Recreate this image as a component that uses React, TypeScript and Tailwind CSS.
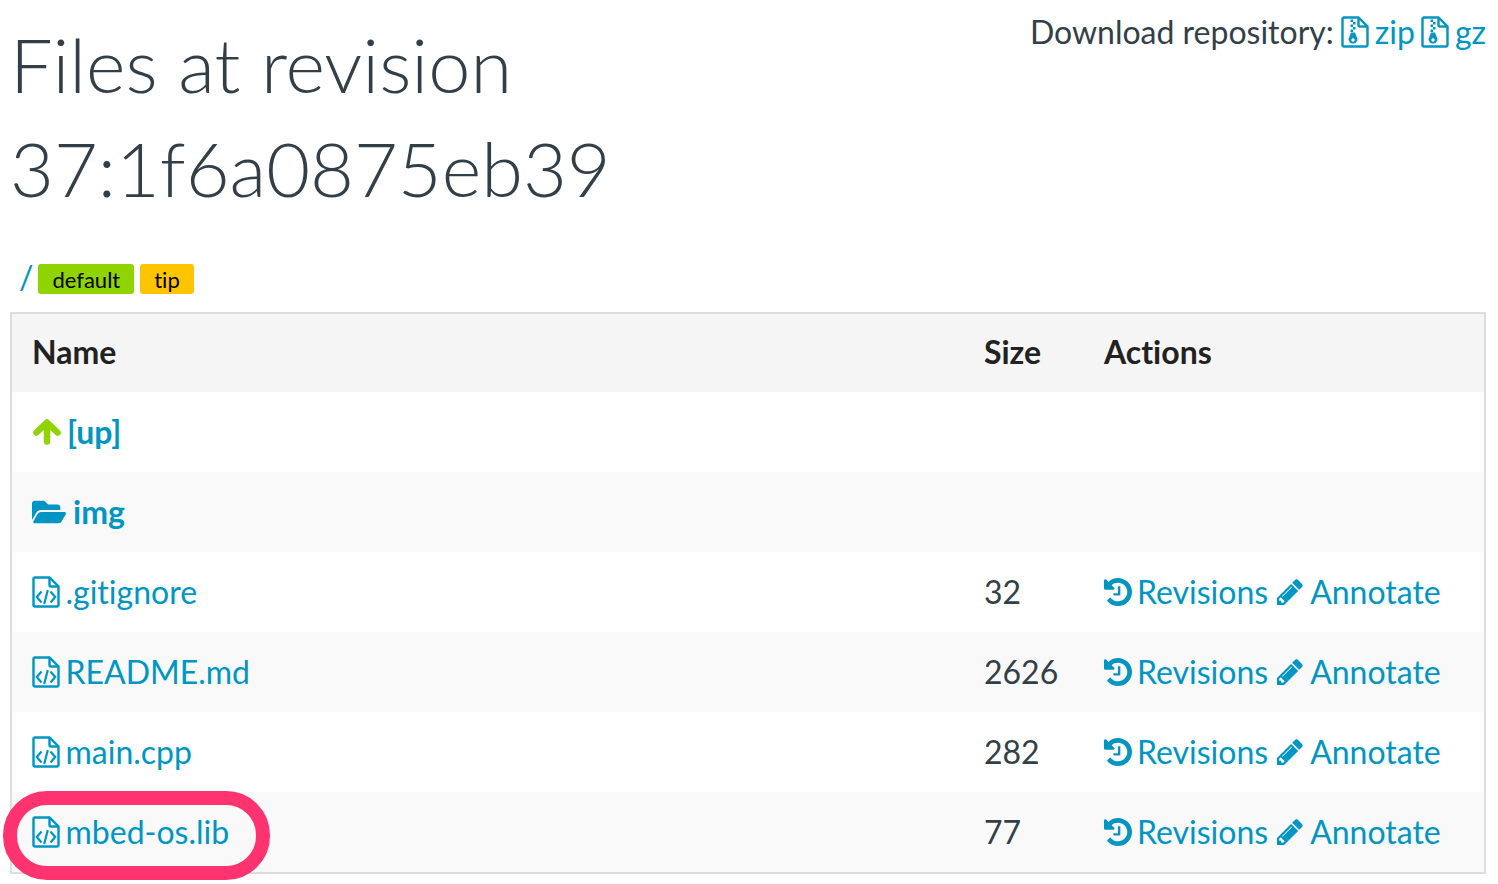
import React from 'react';
import { FaFolderOpen } from 'react-icons/fa';

const rows = [
  { name: '.gitignore', size: '32' },
  { name: 'README.md', size: '2626' },
  { name: 'main.cpp', size: '282' },
  { name: 'mbed-os.lib', size: '77' },
];

function FileCode() {
  return (
    <svg viewBox="0 0 28 32" className="w-[28px] h-[32px] shrink-0" fill="none" stroke="currentColor">
      <path d="M1.5 3A1.5 1.5 0 0 1 3 1.5h14.500l9 9V29a1.500 1.500 0 0 1-1.500 1.500H3A1.500 1.500 0 0 1 1.500 29z" strokeWidth="2.4" />
      <path d="M17.500 1.500V9a1.500 1.500 0 0 0 1.500 1.500h7.500" strokeWidth="2.4" />
      <path d="M9.500 15.500 4.800 21l4.700 5.500M18.500 15.500l4.700 5.500-4.700 5.500M15.800 14l-3.600 14" strokeWidth="2.2" />
    </svg>
  );
}

function FileZip() {
  return (
    <svg viewBox="0 0 28 32" className="w-[28px] h-[32px] shrink-0" fill="none" stroke="currentColor">
      <path d="M1.500 3A1.500 1.500 0 0 1 3 1.500h14.500l9 9V29a1.500 1.500 0 0 1-1.500 1.500H3A1.500 1.500 0 0 1 1.500 29z" strokeWidth="2.4" />
      <path d="M17.500 1.500V9a1.500 1.500 0 0 0 1.500 1.500h7.500" strokeWidth="2.4" />
      <path d="M9.500 3.500h2.500V6H9.500zM12 6h2.500v2.500H12zM9.500 8.500H12V11H9.500zM12 11h2.500v2.500H12zM9.500 13.500H12V16H9.500z" fill="currentColor" stroke="none" />
      <path d="M10 16.500h4l2.500 6.500a4.500 4.500 0 1 1-9 0z" fill="currentColor" stroke="none" />
      <circle cx="12" cy="24" r="1.700" fill="#fff" stroke="none" />
    </svg>
  );
}

function ArrowUp() {
  return (
    <svg viewBox="0 0 28 26" className="ml-[1px] h-[26px] w-[28px] shrink-0 text-[#8fd400]" fill="none" stroke="currentColor" strokeWidth="6.5" strokeLinecap="round" strokeLinejoin="round">
      <path d="M14 22.500V5M3.500 13.500 14 3.500l10.500 10" />
    </svg>
  );
}

function History() {
  return (
    <svg viewBox="128 128 1536 1536" className="h-[28px] w-[28px] shrink-0 mr-[5px]" fill="currentColor">
      <path d="M1664 896q0 156-61 298t-164 245-245 164-298 61q-172 0-327-72.500t-264-204.500q-7-10-6.500-22.500t8.500-20.500l137-137q10-9 25-9 16 2 23 12 73 95 179 147t225 52q104 0 198.500-40.500t163.500-109.500 109.500-163.500 40.500-198.500-40.500-198.500-109.500-163.500-163.500-109.500-198.500-40.500q-98 0-188 35.500t-160 101.500l137 138q31 30 14 69-17 40-59 40h-448q-26 0-45-19t-19-45v-448q0-42 40-59 39-17 69 14l130 129q107-101 244.500-156.500t284.500-55.500q156 0 298 61t245 164 164 245 61 298zm-640-288v448q0 14-9 23t-23 9h-320q-14 0-23-9t-9-23v-64q0-14 9-23t23-9h224v-352q0-14 9-23t23-9h64q14 0 23 9t9 23z" />
    </svg>
  );
}

function Pencil() {
  return (
    <svg viewBox="128 128 1536 1536" className="h-[26px] w-[26px] shrink-0 ml-[9px] mr-[7px]" fill="currentColor">
      <path d="M491 1536l91-91-235-235-91 91v107h128v128h107zm523-928q0-22-22-22-10 0-17 7l-542 542q-7 7-7 17 0 22 22 22 10 0 17-7l542-542q7-7 7-17zm-54-192l416 416-832 832h-416v-416zm683 96q0 53-37 90l-166 166-416-416 166-165q36-38 90-38 53 0 91 38l235 234q37 39 37 91z" />
    </svg>
  );
}

function Actions() {
  return (
    <div className="flex items-center text-[#0095c3]">
      <History />
      <span>Revisions</span>
      <Pencil />
      <span>Annotate</span>
    </div>
  );
}

export default function App() {
  return (
    <div className="relative h-[884px] overflow-hidden bg-white pl-[10px] pr-[12px] font-['Lato',sans-serif] text-[32px] text-[#333f48] [font-variant-ligatures:none]">
      <div className="flex items-start justify-between">
        <h1 className="pt-[12px] text-[75.7px] leading-[104px] font-light">
          <div>Files at revision</div>
          <div>37:1f6a0875eb39</div>
        </h1>
        <div className="flex items-center gap-[7px] pt-[12px] leading-[40px]">
          <span>Download repository:</span>
          <span className="flex items-center gap-[6px] text-[#0095c3]">
            <FileZip />
            <span>zip</span>
            <FileZip />
            <span>gz</span>
          </span>
        </div>
      </div>

      <div className="mt-[38px] flex h-[38px] items-center pl-[9px]">
        <span className="mr-[5px] text-[#0095c3]">/</span>
        <span className="mr-[6px] mt-[4px] rounded-[3px] bg-[#8fd400] px-[14px] pt-[2px] text-[22px] leading-[28px] text-black">default</span>
        <span className="mt-[4px] rounded-[3px] bg-[#ffc400] px-[14px] pt-[2px] text-[22px] leading-[28px] text-black">tip</span>
      </div>

      <div className="mt-[16px] border-2 border-[#dddddd] bg-white">
        <div className="flex h-[78px] items-center bg-[#f5f5f5] px-[20px] pb-[2px] font-bold text-[#222222]">
          <div className="w-[952px]">Name</div>
          <div className="w-[120px]">Size</div>
          <div>Actions</div>
        </div>
        <div className="flex h-[80px] items-center gap-[6px] px-[20px] font-bold text-[#0095c3]">
          <ArrowUp />
          <span>[up]</span>
        </div>
        <div className="flex h-[80px] items-center gap-[7px] bg-[#f9f9f9] px-[20px] font-bold text-[#0095c3]">
          <FaFolderOpen className="h-[32px] w-[34px]" />
          <span>img</span>
        </div>
        {rows.map((row, i) => (
          <div key={row.name} className={`flex h-[80px] items-center px-[20px] ${i % 2 === 1 ? 'bg-[#f9f9f9]' : 'bg-white'}`}>
            <div className="flex w-[952px] items-center gap-[5.5px] text-[#0095c3]">
              <FileCode />
              <span>{row.name}</span>
            </div>
            <div className="w-[120px]">{row.size}</div>
            <Actions />
          </div>
        ))}
      </div>

      <div className="absolute left-[3px] top-[791px] h-[89px] w-[267px] rounded-[44px] border-[14px] border-[#ff3370]" />
    </div>
  );
}
